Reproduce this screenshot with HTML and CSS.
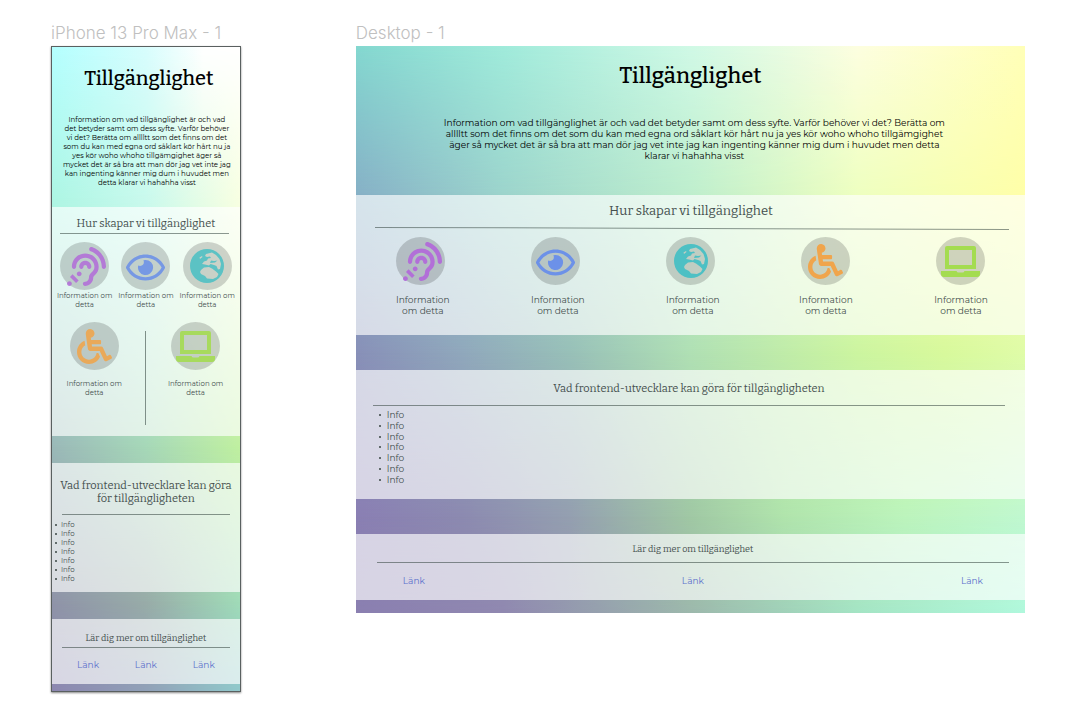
FILE: index.html
```html
<!DOCTYPE html>
<html lang="sv">
<head>
<meta charset="utf-8">
<title>Tillgänglighet</title>
<link rel="stylesheet" href="styles.css">
</head>
<body>
<svg class="defs" aria-hidden="true">
  <symbol id="ear" viewBox="0 0 512 512"><path d="M216 260c0 15.464-12.536 28-28 28s-28-12.536-28-28c0-44.112 35.888-80 80-80s80 35.888 80 80c0 15.464-12.536 28-28 28s-28-12.536-28-28c0-13.234-10.767-24-24-24s-24 10.766-24 24zm24-176c-97.047 0-176 78.953-176 176 0 15.464 12.536 28 28 28s28-12.536 28-28c0-66.168 53.832-120 120-120s120 53.832 120 120c0 75.164-71.009 70.311-71.997 143.622L288 404c0 28.673-23.327 52-52 52-15.464 0-28 12.536-28 28s12.536 28 28 28c59.475 0 107.876-48.328 108-107.774.595-34.428 72-48.24 72-144.226 0-97.047-78.953-176-176-176zm-80 236c-17.673 0-32 14.327-32 32s14.327 32 32 32 32-14.327 32-32-14.327-32-32-32zM32 448c-17.673 0-32 14.327-32 32s14.327 32 32 32 32-14.327 32-32-14.327-32-32-32zm480-187.993c0-1.518-.012-3.025-.045-4.531C510.076 140.525 436.157 38.47 327.994 1.511c-14.633-4.998-30.549 2.809-35.55 17.442-5 14.633 2.81 30.549 17.442 35.55 85.906 29.354 144.61 110.513 146.077 201.953l.003.188c.026 1.118.033 2.236.033 3.363 0 15.464 12.536 28 28 28s28.001-12.536 28.001-28zM152.971 439.029l-80-80L39.03 392.97l80 80 33.941-33.941z"/></symbol>
  <symbol id="eye" viewBox="0 0 576 512"><path d="M288 144a110.94 110.94 0 0 0-31.24 5 55.4 55.4 0 0 1 7.24 27 56 56 0 0 1-56 56 55.4 55.4 0 0 1-27-7.24A111.71 111.71 0 1 0 288 144zm284.52 97.4C518.29 135.59 410.93 64 288 64S57.68 135.64 3.48 241.41a32.35 32.35 0 0 0 0 29.19C57.71 376.41 165.07 448 288 448s230.32-71.64 284.52-177.41a32.35 32.35 0 0 0 0-29.19zM288 400c-98.65 0-189.09-55-237.93-144C98.91 167 189.34 112 288 112s189.09 55 237.93 144C477.1 345 386.66 400 288 400z"/></symbol>
  <symbol id="globe" viewBox="0 0 34 34"><path fill-rule="evenodd" d="M17 0a17 17 0 1 1 0 34a17 17 0 0 1 0-34zM16 5L22 3.500L26 6L29.500 10L31 15L30 20L28 20.500L26.500 17L24 16L20.500 15L19 16.500L15 15.500L12 15L14 12.500L17 11.500L18 9.500L21 9L20 7.500L17 8L15 7zM21 11.500L24 12L27.500 11.500L25 13.500L20 14zM11 21L14 18.500L19 18L22 19.500L26 22.500L28.500 25L27 28L23 30L17 29.500L15 27L11 25L10 23zM9.500 8.500L12 7L12.500 8L10 10z"/></symbol>
  <symbol id="wheelchair" viewBox="0 0 512 512"><path d="M496.101 385.669l14.227 28.663c3.929 7.915.697 17.516-7.218 21.445l-65.465 32.886c-16.049 7.967-35.556 1.194-43.189-15.055L331.679 320H192c-15.925 0-29.426-11.71-31.679-27.475C126.433 55.308 128.38 70.044 128 64c0-36.358 30.318-65.635 67.052-63.929 33.271 1.545 60.048 28.905 60.925 62.201.868 32.933-23.152 60.423-54.608 65.039l4.67 32.69H336c8.837 0 16 7.163 16 16v32c0 8.837-7.163 16-16 16H215.182l4.572 32H352a32 32 0 0 1 28.962 18.392L438.477 396.8l36.178-18.349c7.915-3.929 17.517-.697 21.446 7.218zM311.358 352h-24.506c-7.788 54.204-54.528 96-110.852 96-61.757 0-112-50.243-112-112 0-41.505 22.694-77.809 56.324-97.156-3.712-25.965-6.844-47.86-9.488-66.333C45.956 198.464 0 261.963 0 336c0 97.047 78.953 176 176 176 71.87 0 133.806-43.308 161.11-105.192L311.358 352z"/></symbol>
  <symbol id="laptop" viewBox="0 0 39 31"><path fill-rule="evenodd" d="M6 0H33Q35 0 35 2V23H4V2Q4 0 6 0zM8 4V19H31V4zM0 25H15.500Q16 26.500 17.500 26.500H21.500Q23 26.500 23.500 25H39V28Q39 31 36 31H3Q0 31 0 28z"/></symbol>
</svg>
<main class="board">
  <article class="frame phone">
    <p class="frame-name">iPhone 13 Pro Max - 1</p>
    <div class="screen">
      <div class="backdrop"><i class="tone t1"></i><i class="tone t2"></i><i class="tone t3"></i><i class="tone t4"></i><i class="tone t5"></i></div>
      <header class="hero">
        <h1>Tillgänglighet</h1>
        <p>Information om vad tillgänglighet är och vad<br>det betyder samt om dess syfte. Varför behöver<br>vi det? Berätta om alllltt som det finns om det<br>som du kan med egna ord såklart kör hårt nu ja<br>yes kör woho whoho tillgämgighet äger så<br>mycket det är så bra att man dör jag vet inte jag<br>kan ingenting känner mig dum i huvudet men<br>detta klarar vi hahahha visst</p>
      </header>
      <section class="panel how">
        <h2>Hur skapar vi tillgänglighet</h2>
        <hr>
        <div class="topics">
          <div class="topic"><span class="disc"><svg class="icon ear"><use href="#ear"/></svg></span><p>Information om<br>detta</p></div>
          <div class="topic"><span class="disc"><svg class="icon eye"><use href="#eye"/></svg></span><p>Information om<br>detta</p></div>
          <div class="topic"><span class="disc"><svg class="icon globe"><use href="#globe"/></svg></span><p>Information om<br>detta</p></div>
        </div>
        <div class="topics pair">
          <div class="topic"><span class="disc"><svg class="icon wheelchair"><use href="#wheelchair"/></svg></span><p>Information om<br>detta</p></div>
          <span class="divider"></span>
          <div class="topic"><span class="disc"><svg class="icon laptop"><use href="#laptop"/></svg></span><p>Information om<br>detta</p></div>
        </div>
      </section>
      <section class="panel dev">
        <h2>Vad frontend-utvecklare kan göra<br>för tillgängligheten</h2>
        <hr>
        <ul><li>Info</li><li>Info</li><li>Info</li><li>Info</li><li>Info</li><li>Info</li><li>Info</li></ul>
      </section>
      <section class="panel more">
        <h2>Lär dig mer om tillgänglighet</h2>
        <hr>
        <nav><a href="#">Länk</a><a href="#">Länk</a><a href="#">Länk</a></nav>
      </section>
    </div>
  </article>
  <article class="frame desktop">
    <p class="frame-name">Desktop - 1</p>
    <div class="screen">
      <div class="backdrop"><i class="tone t1"></i><i class="tone t2"></i><i class="tone t3"></i><i class="tone t4"></i><i class="tone t5"></i></div>
      <header class="hero">
        <h1>Tillgänglighet</h1>
        <p>Information om vad tillgänglighet är och vad det betyder samt om dess syfte. Varför behöver vi det? Berätta om<br>alllltt som det finns om det som du kan med egna ord såklart kör hårt nu ja yes kör woho whoho tillgämgighet<br>äger så mycket det är så bra att man dör jag vet inte jag kan ingenting känner mig dum i huvudet men detta<br>klarar vi hahahha visst</p>
      </header>
      <section class="panel how">
        <h2>Hur skapar vi tillgänglighet</h2>
        <hr>
        <div class="topics">
          <div class="topic"><span class="disc"><svg class="icon ear"><use href="#ear"/></svg></span><p>Information<br>om detta</p></div>
          <div class="topic"><span class="disc"><svg class="icon eye"><use href="#eye"/></svg></span><p>Information<br>om detta</p></div>
          <div class="topic"><span class="disc"><svg class="icon globe"><use href="#globe"/></svg></span><p>Information<br>om detta</p></div>
          <div class="topic"><span class="disc"><svg class="icon wheelchair"><use href="#wheelchair"/></svg></span><p>Information<br>om detta</p></div>
          <div class="topic"><span class="disc"><svg class="icon laptop"><use href="#laptop"/></svg></span><p>Information<br>om detta</p></div>
        </div>
      </section>
      <section class="panel dev">
        <h2>Vad frontend-utvecklare kan göra för tillgängligheten</h2>
        <hr>
        <ul><li>Info</li><li>Info</li><li>Info</li><li>Info</li><li>Info</li><li>Info</li><li>Info</li></ul>
      </section>
      <section class="panel more">
        <h2>Lär dig mer om tillgänglighet</h2>
        <hr>
        <nav><a href="#">Länk</a><a href="#">Länk</a><a href="#">Länk</a></nav>
      </section>
    </div>
  </article>
</main>
</body>
</html>
```

FILE: styles.css
```css
* { box-sizing: border-box; }
body { margin: 0; background: #fff; font-family: Montserrat, Inter, sans-serif; }
h1, h2, p, ul { margin: 0; padding: 0; font-weight: 400; }
h1, h2 { font-family: Bitter, "DejaVu Serif Condensed", "DejaVu Serif", serif; text-align: center; }
h1 { font-weight: 500; }
.defs { position: absolute; width: 0; height: 0; }

.board { display: flex; align-items: flex-start; gap: 115px; padding: 20px 60px 20px 51px; }
.phone { flex: 190 1 0; min-width: 0; }
.desktop { flex: 670 1 0; min-width: 0; }
.frame-name { font: 300 17px/26px Inter, sans-serif; color: #c0c0c0; white-space: nowrap; }
.screen { position: relative; white-space: nowrap; }
.phone .screen { box-shadow: 0 1px 2px #888; padding-bottom: 8px; }
.phone .screen::after { content: ""; position: absolute; inset: 0; border: 1px solid #5a6060; pointer-events: none; }
.desktop .screen { padding-bottom: 13px; }

/* Mesh gradient: horizontal ramps that fade into each other downwards */
.backdrop, .tone { position: absolute; inset: 0; }
.tone { -webkit-mask-image: linear-gradient(transparent var(--from), #000 var(--to)); mask-image: linear-gradient(transparent var(--from), #000 var(--to)); }
.tone.t1 { -webkit-mask-image: none; mask-image: none; }
.t2 { --from: 0%; --to: 26%; }
.t3 { --from: 26%; --to: 54%; }
.t4 { --from: 54%; --to: 83%; }
.t5 { --from: 83%; --to: 100%; }
.desktop .t1 { background: linear-gradient(90deg, #84d8d0, #a0ebdb 22%, #d0f9e6 50%, #fdfee0 75%, #ffffb8); }
.desktop .t2 { background: linear-gradient(90deg, #86b0c6, #9cd4cc 22%, #beeecd 50%, #eeffc0 75%, #ffffa8); }
.desktop .t3 { background: linear-gradient(90deg, #8890b8, #90a8bc 16%, #98c0b8 32%, #b0e0b4 50%, #ccf5a0 75%, #d8f99c 88%, #e0fca8); }
.desktop .t4 { background: linear-gradient(90deg, #8a7fb3, #8c8ab0 16%, #949fb0 32%, #a0c8a4 50%, #b0e4ac 64%, #bcf4bc 82%, #c0f8d0); }
.desktop .t5 { background: linear-gradient(90deg, #8a7fb0, #9088b0 22%, #9cb8ac 50%, #a4e4c4 75%, #b0f8dc); }
.phone .t2 { --to: 25%; }
.phone .t3 { --from: 25%; --to: 62%; }
.phone .t4 { --from: 62%; --to: 86%; }
.phone .t5 { --from: 86%; }
.phone .t1 { background: linear-gradient(90deg, #b4ffff, #d8fdfd 50%, #fff 80%); }
.phone .t2 { background: linear-gradient(90deg, #acf5e2, #c8f9ec 50%, #f8ffe0); }
.phone .t3 { background: linear-gradient(90deg, #9ab8b8, #a6d8b8 50%, #c0f0a0); }
.phone .t4 { background: linear-gradient(90deg, #8f93a8, #98aca8 50%, #a0dcb8); }
.phone .t5 { background: linear-gradient(90deg, #8c86b0, #90a0b8 50%, #90c8cc); }

.hero { position: relative; text-align: center; }
.desktop .hero { height: 149px; padding-top: 15px; }
.desktop h1 { font-size: 22px; line-height: 30px; }
.desktop .hero p { margin-top: 26px; padding-left: 8px; font-size: 9px; line-height: 11px; }
.phone .hero { height: 161px; padding-top: 18px; }
.phone h1 { font-size: 20px; line-height: 28px; padding-left: 6px; }
.phone .hero p { margin-top: 23px; font-size: 7px; line-height: 9px; padding-left: 2px; }

.panel { position: relative; background: rgba(255, 255, 255, .66); color: #444f4e; }
.panel hr { border: 0; height: 1px; background: rgba(50, 65, 60, .55); }
.desktop .panel + .panel { margin-top: 35px; }
.phone .panel + .panel { margin-top: 27px; }
.topics { display: flex; justify-content: space-between; }
.topic { display: flex; flex-direction: column; align-items: center; text-align: center; }
.disc { display: flex; align-items: center; justify-content: center; width: 49px; height: 48px; border-radius: 50%; background: rgba(0, 0, 0, .17); }
.icon { flex: none; fill: currentColor; }
.ear { width: 39px; height: 39px; color: #b26fd8; margin-left: 4px; }
.eye { width: 39px; height: 35px; color: #6c91e8; margin-top: 3px; }
.globe { width: 34px; height: 34px; color: #4dc0c4; }
.wheelchair { width: 35px; height: 35px; color: #f0a54c; }
.laptop { width: 39px; height: 31px; color: #a4dc50; }
.phone .icon { opacity: .88; }

.desktop .how { height: 140px; padding: 6px 34px 0 35px; }
.desktop .how h2 { font-size: 13px; line-height: 19px; }
.desktop .how hr { margin: 8px -18px 8px -16px; transform: rotate(.2deg); }
.desktop .topic { width: 60px; gap: 9px; }
.desktop .topic p { font-size: 9px; line-height: 11px; }
.desktop .topic:nth-child(-n+3) p { padding-left: 4px; }
.phone .how { height: 229px; padding-top: 9px; }
.phone .how h2 { font-size: 11px; line-height: 16px; }
.phone hr { margin: 0 11px; }
.phone .how hr { margin: 1px 12px 8px 9px; }
.phone .topics { padding: 0 3px; }
.phone .topic { flex: 1; gap: 1px; }
.phone .topic p { font-size: 7px; line-height: 9px; }
.phone .pair { display: grid; grid-template-columns: minmax(0, 1fr) 1px minmax(0, 1fr); margin-top: 13px; padding: 0; }
.phone .pair .topic { gap: 9px; }
.phone .pair .topic:first-child { padding-right: 8px; }
.phone .pair .topic:last-child { padding-left: 4px; }
.divider { width: 1px; height: 94px; margin-top: 9px; background: #7e8f88; }

ul { display: grid; grid-auto-rows: 1fr; list-style: none; }
li { display: flex; align-items: center; }
li::before { content: ""; width: 2px; height: 2px; background: currentColor; opacity: .8; }
.desktop .dev { height: 129px; padding: 9px 20px 0 17px; }
.desktop .dev h2 { font-size: 11px; line-height: 19px; }
.desktop .dev hr { margin: 7px 0 4px; }
.desktop ul { height: 75px; padding-left: 6px; font-size: 9px; line-height: 10px; }
.desktop li { gap: 6px; }
.phone .dev { height: 129px; padding-top: 16px; }
.phone .dev h2 { font-size: 11px; line-height: 13px; }
.phone .dev hr { margin-top: 9px; margin-bottom: 5px; }
.phone ul { padding-left: 4px; font-size: 7px; line-height: 9px; }
.phone li { gap: 4px; }

nav { display: flex; justify-content: space-between; }
nav a { color: #5c70cc; text-decoration: none; font-size: 9px; line-height: 12px; }
.more h2 { font-size: 9px; line-height: 14px; }
.desktop .more { height: 66px; padding: 8px 16px 0 21px; }
.desktop .more hr { margin: 6px 0 12px; }
.desktop nav { padding: 0 26px; }
.phone .more { height: 65px; padding-top: 12px; }
.phone .more hr { margin-top: 2px; margin-bottom: 11px; }
.phone nav { padding: 0 26px; }
```
